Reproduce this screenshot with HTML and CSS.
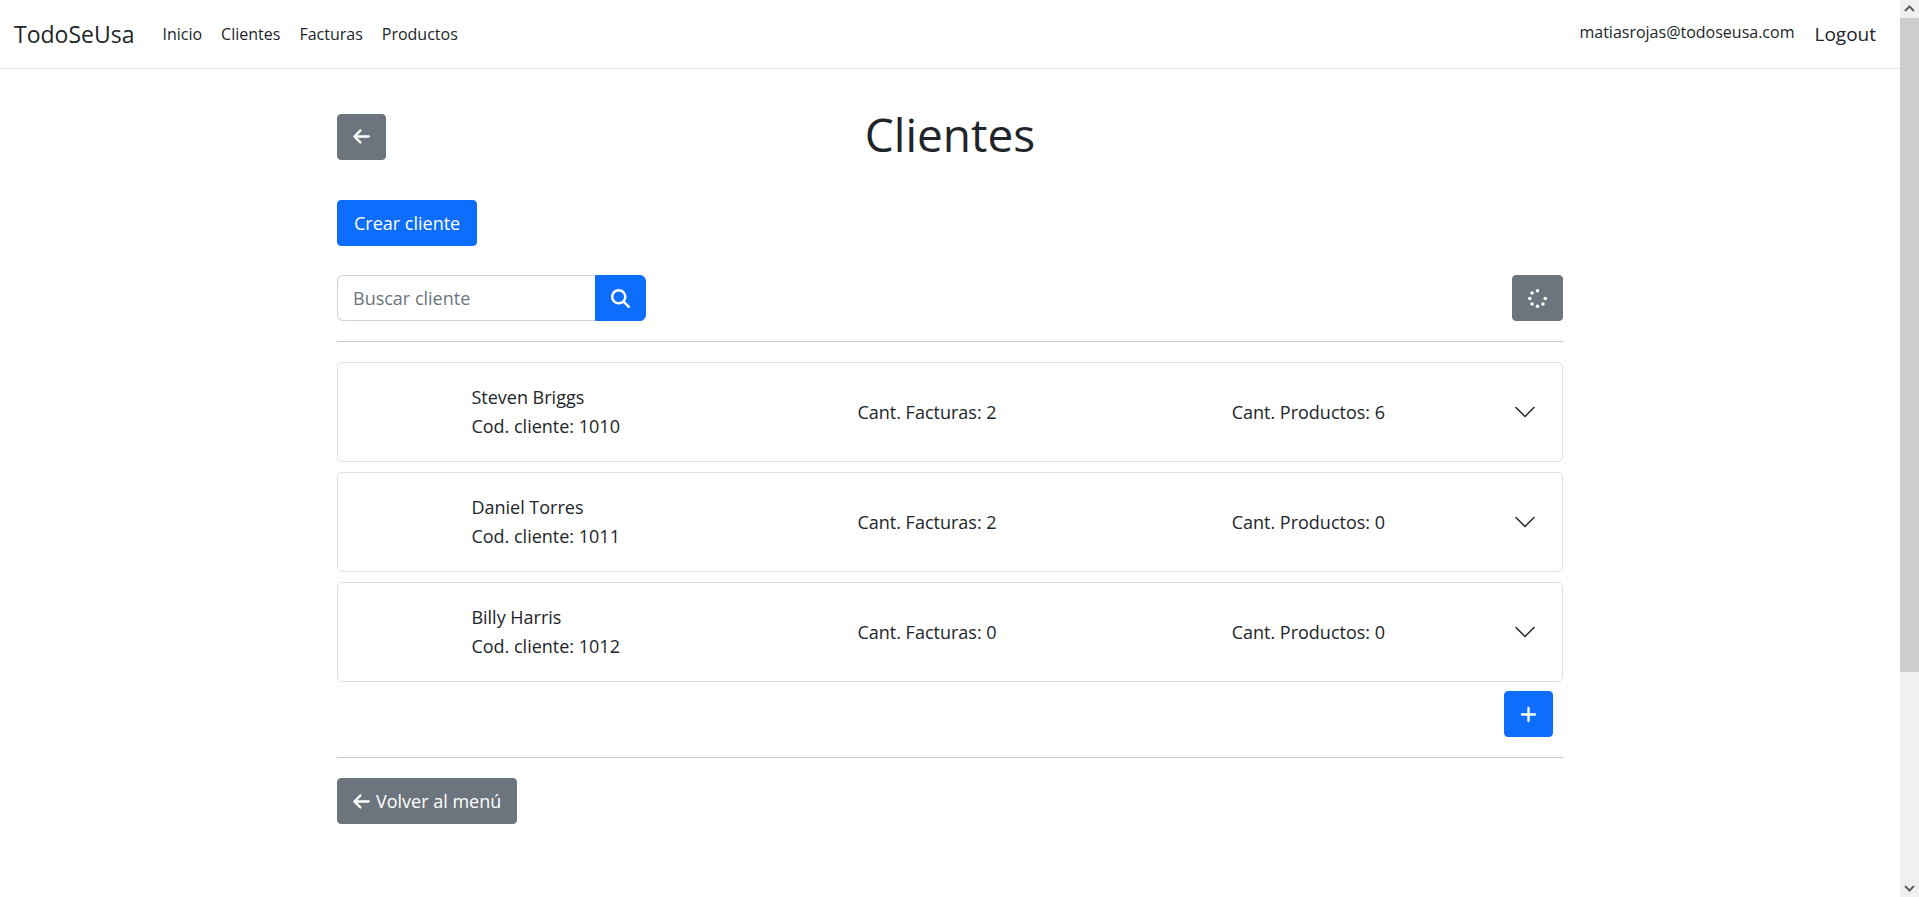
FILE: index.html
```html
<!DOCTYPE html>
<html lang="es">
<head>
<meta charset="utf-8">
<meta name="viewport" content="width=device-width, initial-scale=1">
<title>Clientes - TodoSeUsa</title>
<link rel="stylesheet" href="styles.css">
</head>
<body>
<svg class="sprite" aria-hidden="true">
  <symbol id="arrow-left" viewBox="0 0 448 512"><path d="M9.4 233.4c-12.5 12.5-12.5 32.8 0 45.3l160 160c12.5 12.5 32.8 12.5 45.3 0s12.5-32.8 0-45.3L109.2 288 416 288c17.7 0 32-14.3 32-32s-14.3-32-32-32l-306.7 0L214.6 118.6c12.5-12.5 12.5-32.8 0-45.3s-32.8-12.5-45.3 0l-160 160z"/></symbol>
  <symbol id="chevron" viewBox="0 0 16 16"><path d="M1.646 4.646a.5.5 0 0 1 .708 0L8 10.293l5.646-5.647a.5.5 0 0 1 .708.708l-6 6a.5.5 0 0 1-.708 0l-6-6a.5.5 0 0 1 0-.708z"/></symbol>
</svg>
<div class="page">
  <header class="navbar">
    <a class="brand" href="#">TodoSeUsa</a>
    <nav class="links">
      <a href="#">Inicio</a>
      <a href="#">Clientes</a>
      <a href="#">Facturas</a>
      <a href="#">Productos</a>
    </nav>
    <span class="email">matiasrojas@todoseusa.com</span>
    <a class="logout" href="#">Logout</a>
  </header>
  <main class="container">
    <div class="heading">
      <a class="btn btn-secondary" href="#" aria-label="Volver"><svg class="icon icon-narrow"><use href="#arrow-left"/></svg></a>
      <h1>Clientes</h1>
    </div>
    <button class="btn btn-primary create" type="button">Crear cliente</button>
    <div class="toolbar">
      <form class="search">
        <input type="text" placeholder="Buscar cliente" aria-label="Buscar cliente">
        <button class="btn btn-primary" type="button" aria-label="Buscar"><svg class="icon" viewBox="0 0 512 512"><path d="M416 208c0 45.9-14.9 88.3-40 122.7L502.6 457.4c12.5 12.5 12.5 32.8 0 45.3s-32.8 12.5-45.3 0L330.7 376c-34.4 25.2-76.8 40-122.7 40C93.1 416 0 322.9 0 208S93.1 0 208 0S416 93.1 416 208zM208 352a144 144 0 1 0 0-288 144 144 0 1 0 0 288z"/></svg></button>
      </form>
      <button class="btn btn-secondary" type="button" aria-label="Recargar"><svg class="icon" viewBox="0 0 512 512"><circle cx="256" cy="48" r="48"/><circle cx="256" cy="464" r="48"/><circle cx="48" cy="256" r="48"/><circle cx="464" cy="256" r="48"/><circle cx="109" cy="109" r="48"/><circle cx="109" cy="403" r="48"/><circle cx="403" cy="403" r="48"/></svg></button>
    </div>
    <hr>
    <div class="clients">
      <button class="client" type="button" aria-expanded="false">
        <span class="cell"><span>Steven Briggs<br>Cod. cliente: 1010</span></span>
        <span class="cell">Cant. Facturas: 2</span>
        <span class="cell">Cant. Productos: 6</span>
        <svg class="chevron"><use href="#chevron"/></svg>
      </button>
      <button class="client" type="button" aria-expanded="false">
        <span class="cell"><span>Daniel Torres<br>Cod. cliente: 1011</span></span>
        <span class="cell">Cant. Facturas: 2</span>
        <span class="cell">Cant. Productos: 0</span>
        <svg class="chevron"><use href="#chevron"/></svg>
      </button>
      <button class="client" type="button" aria-expanded="false">
        <span class="cell"><span>Billy Harris<br>Cod. cliente: 1012</span></span>
        <span class="cell">Cant. Facturas: 0</span>
        <span class="cell">Cant. Productos: 0</span>
        <svg class="chevron"><use href="#chevron"/></svg>
      </button>
    </div>
    <div class="more">
      <button class="btn btn-primary" type="button" aria-label="Cargar más"><svg class="icon icon-narrow" viewBox="0 0 448 512"><path d="M256 80c0-17.7-14.3-32-32-32s-32 14.3-32 32V224H48c-17.7 0-32 14.3-32 32s14.3 32 32 32H192V432c0 17.7 14.3 32 32 32s32-14.3 32-32V288H400c17.7 0 32-14.3 32-32s-14.3-32-32-32H256V80z"/></svg></button>
    </div>
    <hr>
    <a class="btn btn-secondary" href="#"><svg class="icon icon-narrow"><use href="#arrow-left"/></svg>Volver al menú</a>
  </main>
</div>
<div class="scrollbar" aria-hidden="true">
  <svg class="scroll-arrow" viewBox="0 0 19 18"><path d="M5 11l4.500-4.500 4.500 4.500"/></svg>
  <div class="track"><div class="thumb"></div></div>
  <svg class="scroll-arrow" viewBox="0 0 19 18"><path d="M5 7l4.500 4.500 4.500-4.500"/></svg>
</div>
</body>
</html>
```
FILE: styles.css
```css
*, *::before, *::after { box-sizing: border-box; }

body {
  margin: 0;
  display: flex;
  min-height: 100vh;
  background: #fff;
  color: #212529;
  font-family: "Segoe UI", "Open Sans", "Noto Sans", sans-serif;
  font-size: 18px;
  line-height: 29px;
}

a { color: inherit; text-decoration: none; }
button, input { font: inherit; color: inherit; }
.sprite { position: absolute; width: 0; height: 0; }
.page { flex: 1; min-width: 0; }

.navbar {
  display: flex;
  align-items: center;
  height: 69px;
  padding: 0 24px 0 14px;
  border-bottom: 1px solid #dee2e6;
}
.brand { font-size: 23px; margin-right: 28px; }
.links { display: flex; gap: 19px; font-size: 16px; }
.email { margin-left: auto; margin-right: 20px; padding-bottom: 4px; font-size: 16px; }
.logout { font-size: 19px; }

.container {
  width: 100%;
  max-width: 1226px;
  margin: 0 auto;
  padding-top: 35px;
}

.heading {
  display: grid;
  grid-template-columns: 1fr auto 1fr;
  align-items: center;
  justify-items: start;
  margin-bottom: 31px;
}
h1 { margin: 0; padding-bottom: 4px; font-size: 46px; font-weight: 400; line-height: 61px; }

.btn {
  display: inline-flex;
  align-items: center;
  justify-content: center;
  gap: 6px;
  height: 46px;
  padding: 0 15px;
  border: 1px solid transparent;
  border-radius: 4px;
  color: #fff;
}
.btn-primary { background: #0d6efd; border-color: #0d6efd; }
.btn-secondary { background: #6c757d; border-color: #6c757d; }
.icon { width: 19px; height: 19px; fill: currentColor; flex: none; }
.icon-narrow { width: 17px; }

.create { padding: 0 16px; }

.toolbar { display: flex; justify-content: space-between; margin-top: 29px; }
.search { display: flex; }
.search input {
  width: 258px;
  height: 46px;
  padding: 0 15px;
  border: 1px solid #ced4da;
  border-right: 0;
  border-radius: 6px 0 0 6px;
  background: #fff;
}
.search input::placeholder { color: #6c757d; opacity: 1; }
.search .btn { border-radius: 0 6px 6px 0; }

hr { margin: 20px 0; border: 0; border-top: 1px solid #c7c8c9; }

.clients { display: grid; gap: 10px; }
.client {
  display: grid;
  grid-template-columns: repeat(3, 1fr) 38px;
  align-items: center;
  justify-items: center;
  width: 100%;
  padding: 20px 25px 20px 17px;
  border: 1px solid #dfdfdf;
  border-radius: 5px;
  background: #fff;
  text-align: left;
}
.chevron { justify-self: end; width: 24px; height: 24px; fill: #212529; }

.more { display: flex; justify-content: flex-end; padding: 9px 10px 0; }

.scrollbar {
  position: sticky;
  top: 0;
  display: flex;
  flex-direction: column;
  width: 19px;
  height: 100vh;
  background: #f0f0f0;
}
.scroll-arrow { width: 19px; height: 18px; fill: none; stroke: #606060; stroke-width: 2; }
.track { flex: 1; }
.thumb { height: 76%; background: #cdcdcd; }
```
